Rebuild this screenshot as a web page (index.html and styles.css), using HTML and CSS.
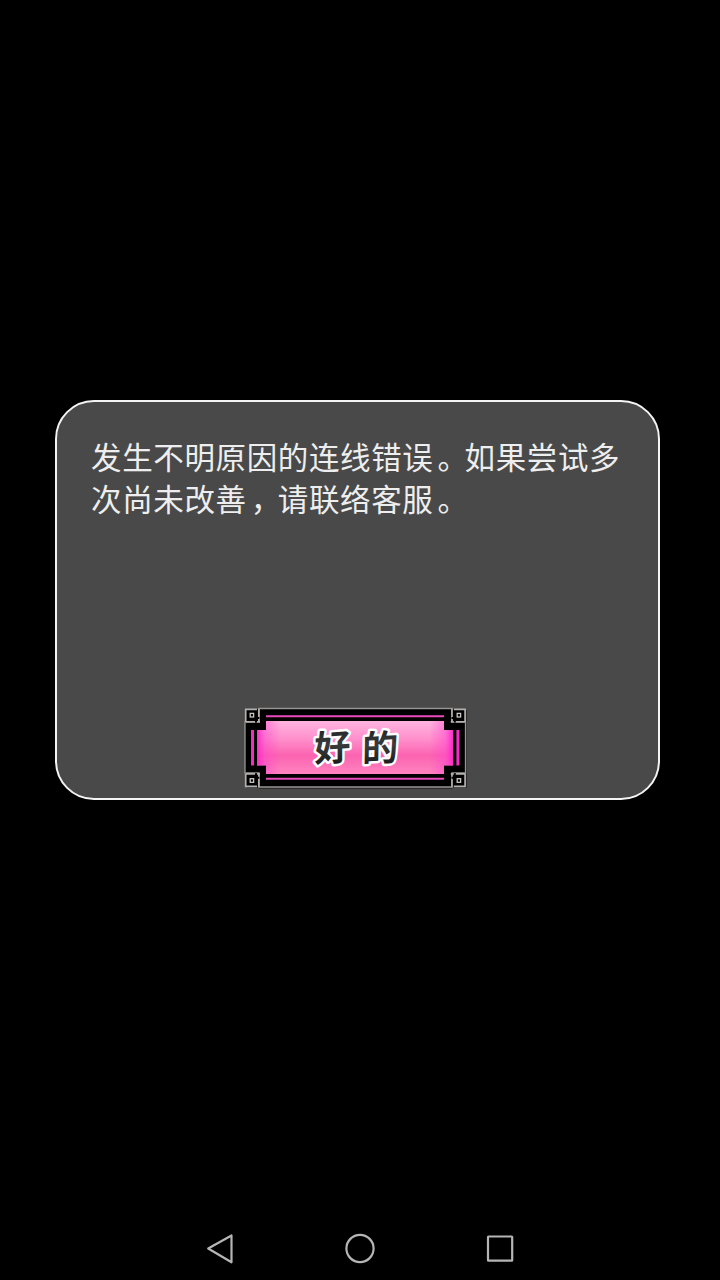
FILE: index.html
```html
<!DOCTYPE html>
<html lang="zh-CN">
<head>
<meta charset="utf-8">
<title>连线错误</title>
<link rel="stylesheet" href="styles.css">
</head>
<body>
<main class="screen">
  <section class="dialog" role="alertdialog">
    <p class="message">发生不明原因的连线错误<span class="mark">。</span>如果尝试多次尚未改善<span class="mark">，</span>请联络客服<span class="mark">。</span></p>
    <button class="confirm" type="button">
      <svg class="confirm-art" viewBox="244 707 224 83" width="224" height="83">
        <defs>
          <linearGradient id="fill" x1="0" y1="0" x2="0" y2="1">
            <stop offset="0" stop-color="#ffb4e0"/>
            <stop offset=".35" stop-color="#ff8ecb"/>
            <stop offset=".65" stop-color="#fb63b0"/>
            <stop offset="1" stop-color="#ff84c0"/>
          </linearGradient>
          <linearGradient id="edge" x1="0" y1="0" x2="1" y2="0">
            <stop offset="0" stop-color="#ff20c8" stop-opacity=".9"/>
            <stop offset=".04" stop-color="#ff40d0" stop-opacity=".45"/>
            <stop offset=".12" stop-color="#ff40c8" stop-opacity="0"/>
            <stop offset=".88" stop-color="#ff40c8" stop-opacity="0"/>
            <stop offset=".96" stop-color="#ff40d0" stop-opacity=".45"/>
            <stop offset="1" stop-color="#ff20c8" stop-opacity=".9"/>
          </linearGradient>
          <linearGradient id="ink" x1="0" y1="0" x2="0" y2="1">
            <stop offset="0" stop-color="#161616"/>
            <stop offset=".5" stop-color="#3a3c3c"/>
            <stop offset="1" stop-color="#101010"/>
          </linearGradient>
          <g id="corner">
            <rect x="245.5" y="709" width="13.5" height="13.5" fill="#000"/>
            <path d="M245.7 722V709.3H257M258.8 708.5V717M258.8 719V721M245.5 721.8H255M257 721.8H260" fill="none" stroke="#b4b0ae" stroke-width="1.7"/>
            <rect x="250.2" y="713.4" width="3.4" height="3.6" fill="none" stroke="#cac6c4" stroke-width="1.3"/>
          </g>
        </defs>
        <path d="M259 709H452V710H467V788H452V789H259V788H247V709Z" fill="#2a2a2a"/>
        <path d="M259 708.5H452V722H465.5V773H452V787H259V773H245V722H259Z" fill="#000" stroke="#989492" stroke-width="1.3"/>
        <path d="M266 721H444V730H453V765.5H444V774H266V765.5H257V730H266Z" fill="url(#fill)"/>
        <path d="M266 721H444V730H453V765.5H444V774H266V765.5H257V730H266Z" fill="url(#edge)"/>
        <path d="M266 716.2H444M266 778.8H444" stroke="#e94bbd" stroke-width="2"/>
        <path d="M252.5 730V765.5M457.9 730V765.5" stroke="#f62bc6" stroke-width="3"/>
        <use href="#corner"/>
        <use href="#corner" transform="matrix(-1 0 0 1 710.8 0)"/>
        <use href="#corner" transform="matrix(1 0 0 -1 0 1495.7)"/>
        <use href="#corner" transform="matrix(-1 0 0 -1 710.8 1495.7)"/>
        <g class="label">
          <text transform="translate(314.5 762) rotate(-4) skewX(-4)">好</text>
          <text transform="translate(362 762) rotate(-3) skewX(-4)">的</text>
        </g>
      </svg>
    </button>
  </section>
</main>
<nav class="navbar">
  <svg viewBox="0 0 32 32"><path d="M4.2 16.5 27.5 3.5V30.3Z"/></svg>
  <svg viewBox="0 0 32 32"><circle cx="16" cy="16.5" r="13.6"/></svg>
  <svg viewBox="0 0 32 32"><rect x="4" y="4.5" width="24.2" height="24.2" rx=".5"/></svg>
</nav>
</body>
</html>
```
FILE: styles.css
```css
* {
  box-sizing: border-box;
}

body {
  margin: 0;
  height: 1280px;
  background: #000;
  display: flex;
  flex-direction: column;
  font-family: "Noto Sans CJK SC", sans-serif;
  overflow: hidden;
}

.screen {
  flex: 1;
  padding: 399.5px 60px 0 55px;
}

.dialog {
  height: 400px;
  padding: 33px 34px 8px;
  border: 2.5px solid #f4f4f4;
  border-radius: 39px;
  background: #494949;
  display: flex;
  flex-direction: column;
  justify-content: space-between;
}

.message {
  margin: 0;
  width: 532px;
  color: #eee;
  font-size: 30.5px;
  line-height: 42px;
  letter-spacing: 0.63px;
  word-break: break-all;
}

.mark {
  padding-left: 4px;
  letter-spacing: -3.37px;
}

.confirm {
  display: block;
  padding: 0;
  margin-left: 153px;
  width: 224px;
  height: 83px;
  border: 0;
  background: none;
}

.confirm-art {
  display: block;
}

.label text {
  font-family: "Noto Sans CJK SC", sans-serif;
  font-size: 36px;
  font-weight: 700;
  fill: url(#ink);
  stroke: #fff;
  stroke-width: 5px;
  stroke-linejoin: round;
  paint-order: stroke;
}

.navbar {
  height: 64px;
  padding-left: 204px;
  display: flex;
  align-items: center;
  gap: 108px;
}

.navbar svg {
  width: 32px;
  height: 32px;
  fill: none;
  stroke: #b5b5b5;
  stroke-width: 2.2;
  stroke-linejoin: round;
}
```
